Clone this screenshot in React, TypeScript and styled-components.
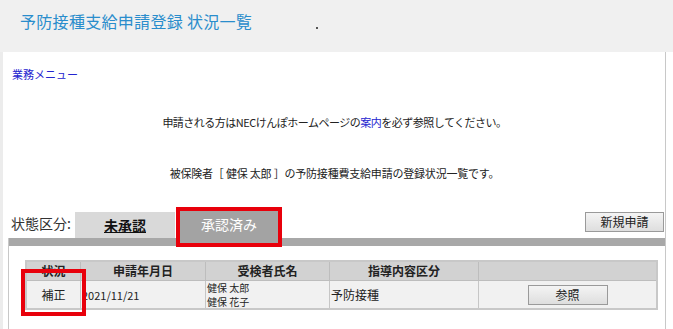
import React from "react";
import styled, { createGlobalStyle } from "styled-components";

const Global = createGlobalStyle`
  html, body { margin: 0; padding: 0; background: #ffffff; }
  body {
    font-family: "Noto Sans CJK JP", "Noto Sans", sans-serif;
    color: #222;
    width: 673px;
    height: 329px;
    overflow: hidden;
  }
`;

const Header = styled.header`
  height: 52px;
  background: #f0f0f0;
  display: flex;
  align-items: flex-start;
  padding: 9px 0 0 20px;
  box-sizing: border-box;
`;

const Title = styled.h1`
  margin: 0;
  font-size: 16px;
  font-weight: 400;
  line-height: 24px;
  color: #2a8dcc;
  letter-spacing: 0.3px;
`;

const Dot = styled.span`
  width: 2px;
  height: 2px;
  background: #555;
  margin: 18px 0 0 64px;
`;

const Body = styled.div`
  display: flex;
  height: 277px;
`;

const LeftStrip = styled.div`
  width: 3px;
  background: #ececec;
`;

const Content = styled.main`
  width: 661px;
  margin-left: 1px;
  border-right: 1px solid #c8c8c8;
  display: flex;
  flex-direction: column;
`;

const MenuLink = styled.a`
  margin: 15px 0 0 8px;
  font-size: 11px;
  line-height: 14px;
  color: #2424d0;
  text-decoration: none;
  align-self: flex-start;
`;

const Notice = styled.p<{ $top: number; $ls: number }>`
  margin: ${(p) => p.$top}px 0 0;
  text-align: center;
  font-size: 11px;
  letter-spacing: ${(p) => p.$ls}px;
  line-height: 16px;
  color: #222;
`;

const InlineLink = styled.a`
  color: #2424d0;
  text-decoration: none;
`;

const TabRow = styled.div`
  margin-top: 26px;
  display: flex;
  align-items: flex-end;
  height: 31px;
  padding-left: 7px;
`;

const TabLabel = styled.span`
  font-size: 14px;
  line-height: 18px;
  color: #333;
  width: 64px;
  margin-bottom: 6px;
`;

const Tab = styled.div<{ $active?: boolean }>`
  width: ${(p) => (p.$active ? 98 : 100)}px;
  height: ${(p) => (p.$active ? 32 : 26)}px;
  margin-left: ${(p) => (p.$active ? 5 : 0)}px;
  margin-bottom: ${(p) => (p.$active ? -5 : 0)}px;
  background: ${(p) => (p.$active ? "#a3a3a3" : "#d9d9d9")};
  color: ${(p) => (p.$active ? "#ffffff" : "#111")};
  font-weight: ${(p) => (p.$active ? 400 : 700)};
  text-decoration: ${(p) => (p.$active ? "none" : "underline")};
  font-size: 14px;
  display: flex;
  align-items: ${(p) => (p.$active ? "flex-start" : "center")};
  padding-top: ${(p) => (p.$active ? 3 : 0)}px;
  box-sizing: border-box;
  justify-content: center;
  position: relative;
  z-index: 1;
  outline: ${(p) => (p.$active ? "4px solid #e8000b" : "none")};
`;

const Spacer = styled.div`
  flex: 1;
`;

const Button = styled.button<{ $w: number }>`
  width: ${(p) => p.$w}px;
  height: 20px;
  font-family: inherit;
  font-size: 12px;
  line-height: 16px;
  color: #222;
  border: 1px solid #9a9a9a;
  background: linear-gradient(#f4f4f4, #dedede);
  padding: 0;
  cursor: pointer;
`;

const NewButton = styled(Button)`
  margin-bottom: 6px;
  margin-right: 1px;
`;

const RowButton = styled(Button)`
  display: block;
  margin: 0 auto;
`;

const Panel = styled.section`
  margin-left: 4px;
  border-left: 1px solid #c8c8c8;
  flex: 1;
`;

const Bar = styled.div`
  height: 8px;
  background: #a8a8a8;
`;

const Table = styled.table`
  margin: 14px 0 0 16px;
  border-collapse: collapse;
  border: 2px solid #c8c8c8;
  font-size: 12px;
`;

const Th = styled.th<{ $w: number }>`
  width: ${(p) => p.$w}px;
  height: 18px;
  padding: 0;
  background: #d2d2d2;
  border: 1px solid #bdbdbd;
  font-weight: 700;
  line-height: 16px;
  color: #222;
`;

const Td = styled.td<{ $align?: string }>`
  height: 27px;
  padding: 0 1px;
  background: #f1f1f1;
  border: 1px solid #c6c6c6;
  text-align: ${(p) => p.$align || "left"};
  vertical-align: middle;
  line-height: 14px;
`;

const Small = styled.span`
  font-size: 11px;
`;

const Names = styled.div`
  font-size: 10px;
  line-height: 13.5px;
  display: flex;
  flex-direction: column;
`;

const Marked = styled.span`
  position: relative;
  display: inline-block;
  vertical-align: middle;
  line-height: 14px;
`;

const Highlight = styled.span`
  position: absolute;
  top: -19px;
  bottom: -14px;
  left: -20px;
  right: -20px;
  border: 4px solid #e8000b;
  pointer-events: none;
  z-index: 2;
`;

export default function App() {
  return (
    <>
      <Global />
      <Header>
        <Title>予防接種支給申請登録 状況一覧</Title>
        <Dot />
      </Header>
      <Body>
        <LeftStrip />
        <Content>
          <MenuLink href="#">業務メニュー</MenuLink>
          <Notice $top={33} $ls={-0.5}>
            申請される方はNECけんぽホームページの<InlineLink href="#">案内</InlineLink>を必ず参照してください。
          </Notice>
          <Notice $top={35} $ls={-0.2}>被保険者［ 健保 太郎 ］の予防接種費支給申請の登録状況一覧です。</Notice>
          <TabRow>
            <TabLabel>状態区分:</TabLabel>
            <Tab>未承認</Tab>
            <Tab $active>承認済み</Tab>
            <Spacer />
            <NewButton $w={79}>新規申請</NewButton>
          </TabRow>
          <Panel>
            <Bar />
            <Table>
              <thead>
                <tr>
                  <Th $w={53}>状況</Th>
                  <Th $w={124}>申請年月日</Th>
                  <Th $w={123}>受検者氏名</Th>
                  <Th $w={148}>指導内容区分</Th>
                  <Th $w={177}></Th>
                </tr>
              </thead>
              <tbody>
                <tr>
                  <Td $align="center">
                    <Marked>
                      補正
                      <Highlight />
                    </Marked>
                  </Td>
                  <Td>
                    <Small>2021/11/21</Small>
                  </Td>
                  <Td>
                    <Names>
                      <span>健保 太郎</span>
                      <span>健保 花子</span>
                    </Names>
                  </Td>
                  <Td>予防接種</Td>
                  <Td $align="center">
                    <RowButton $w={80}>参照</RowButton>
                  </Td>
                </tr>
              </tbody>
            </Table>
          </Panel>
        </Content>
      </Body>
    </>
  );
}
